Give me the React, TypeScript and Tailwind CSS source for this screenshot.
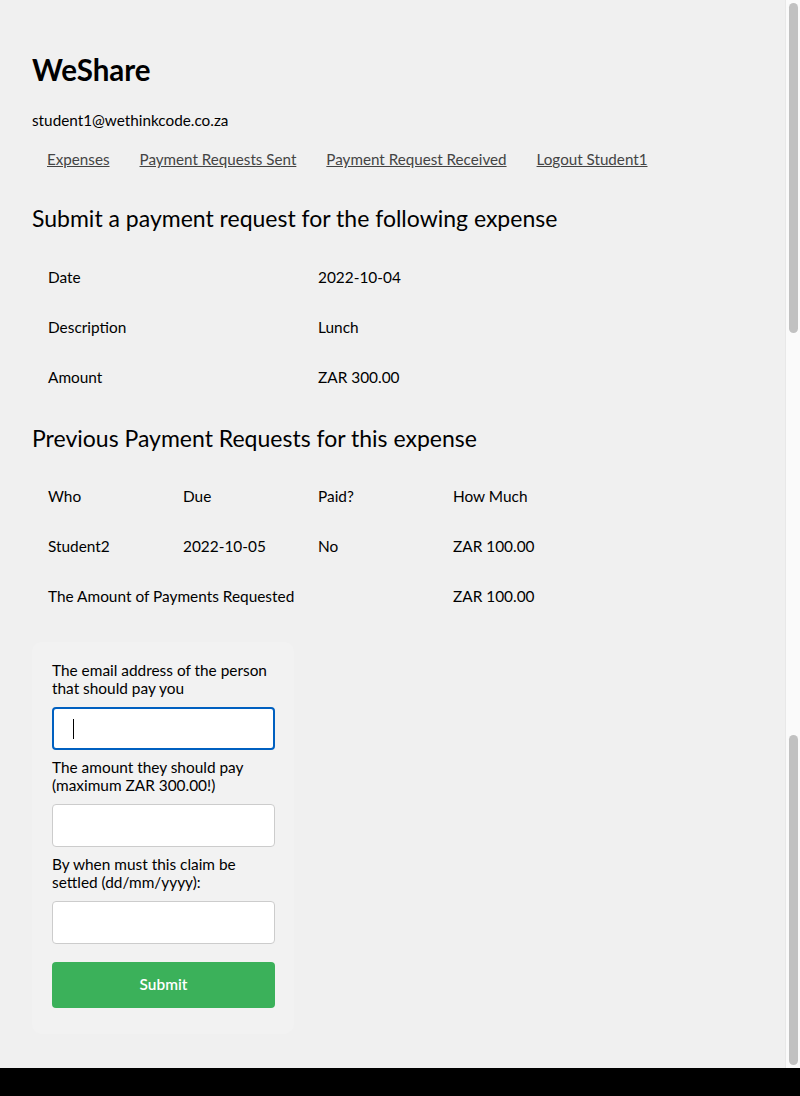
import React from 'react'

const font = { fontFamily: 'Lato, "Noto Sans", sans-serif' }

function Row({ cells, widths }: { cells: string[]; widths: string[] }) {
  return (
    <div className="flex h-[50px] items-center">
      {cells.map((c, i) => (
        <div key={i} className={`${widths[i]} pl-[16px] text-[15.4px] text-black`}>
          {c}
        </div>
      ))}
    </div>
  )
}

function Field({ label, focused }: { label: string; focused?: boolean }) {
  return (
    <>
      <div className="mt-[8px] w-[223px] text-[15.4px] leading-[18px] text-black first:mt-0">{label}</div>
      <div
        className={
          focused
            ? 'mt-[10px] flex h-[43px] w-[223px] items-center rounded-[4px] border-2 border-[#0060c0] bg-white pl-[19px]'
            : 'mt-[10px] h-[43px] w-[223px] rounded-[4px] border border-[#cccccc] bg-white'
        }
      >
        {focused && <span className="h-[20px] w-px bg-black" />}
      </div>
    </>
  )
}

export default function App() {
  const expense = [
    ['Date', '2022-10-04'],
    ['Description', 'Lunch'],
    ['Amount', 'ZAR 300.00'],
  ]
  const nav = ['Expenses', 'Payment Requests Sent', 'Payment Request Received', 'Logout Student1']

  return (
    <div style={font} className="w-[800px]">
      <div className="flex h-[1068px]">
        <div className="flex-1 overflow-hidden bg-[#f0f0f0] pl-[32px] pt-[50px]">
          <h1 className="text-[29.5px] font-bold leading-[40px] text-black">WeShare</h1>
          <div className="mt-[20px] text-[15.3px] leading-[20px] text-black">student1@wethinkcode.co.za</div>
          <nav className="mt-[19px] flex text-[15.2px] leading-[20px]">
            {nav.map(n => (
              <a key={n} href="#" className="px-[15px] text-[#444444] underline">
                {n}
              </a>
            ))}
          </nav>
          <h2 className="mt-[33px] text-[23px] leading-[32px] text-black">
            Submit a payment request for the following expense
          </h2>
          <div className="mt-[19px]">
            {expense.map(r => (
              <Row key={r[0]} cells={r} widths={['w-[270px]', 'w-[270px]']} />
            ))}
          </div>
          <h2 className="mt-[19px] text-[23px] leading-[32px] text-black">
            Previous Payment Requests for this expense
          </h2>
          <div className="mt-[18px]">
            <Row cells={['Who', 'Due', 'Paid?', 'How Much']} widths={['w-[135px]', 'w-[135px]', 'w-[135px]', 'w-[135px]']} />
            <Row
              cells={['Student2', '2022-10-05', 'No', 'ZAR 100.00']}
              widths={['w-[135px]', 'w-[135px]', 'w-[135px]', 'w-[135px]']}
            />
            <Row cells={['The Amount of Payments Requested', 'ZAR 100.00']} widths={['w-[405px]', 'w-[135px]']} />
          </div>
          <form className="mt-[20px] flex w-[262px] flex-col rounded-[10px] bg-[#f2f2f2] px-[20px] pb-[26px] pt-[19px]">
            <Field label="The email address of the person that should pay you" focused />
            <Field label="The amount they should pay (maximum ZAR 300.00!)" />
            <Field label="By when must this claim be settled (dd/mm/yyyy):" />
            <button
              type="button"
              className="mt-[18px] h-[46px] w-[223px] rounded-[4px] bg-[#3bb15a] text-[15.4px] font-semibold text-white"
            >
              Submit
            </button>
          </form>
        </div>
        <div className="flex w-[15px] flex-col border-l border-[#e8e8e8] bg-[#fafafa] py-[3px] pl-[3px] pr-[2px]">
          <div className="h-[330px] rounded-full bg-[#c1c1c1]" />
          <div className="flex-1" />
          <div className="h-[330px] rounded-full bg-[#c1c1c1]" />
        </div>
      </div>
      <div className="h-[28px] bg-black" />
    </div>
  )
}
